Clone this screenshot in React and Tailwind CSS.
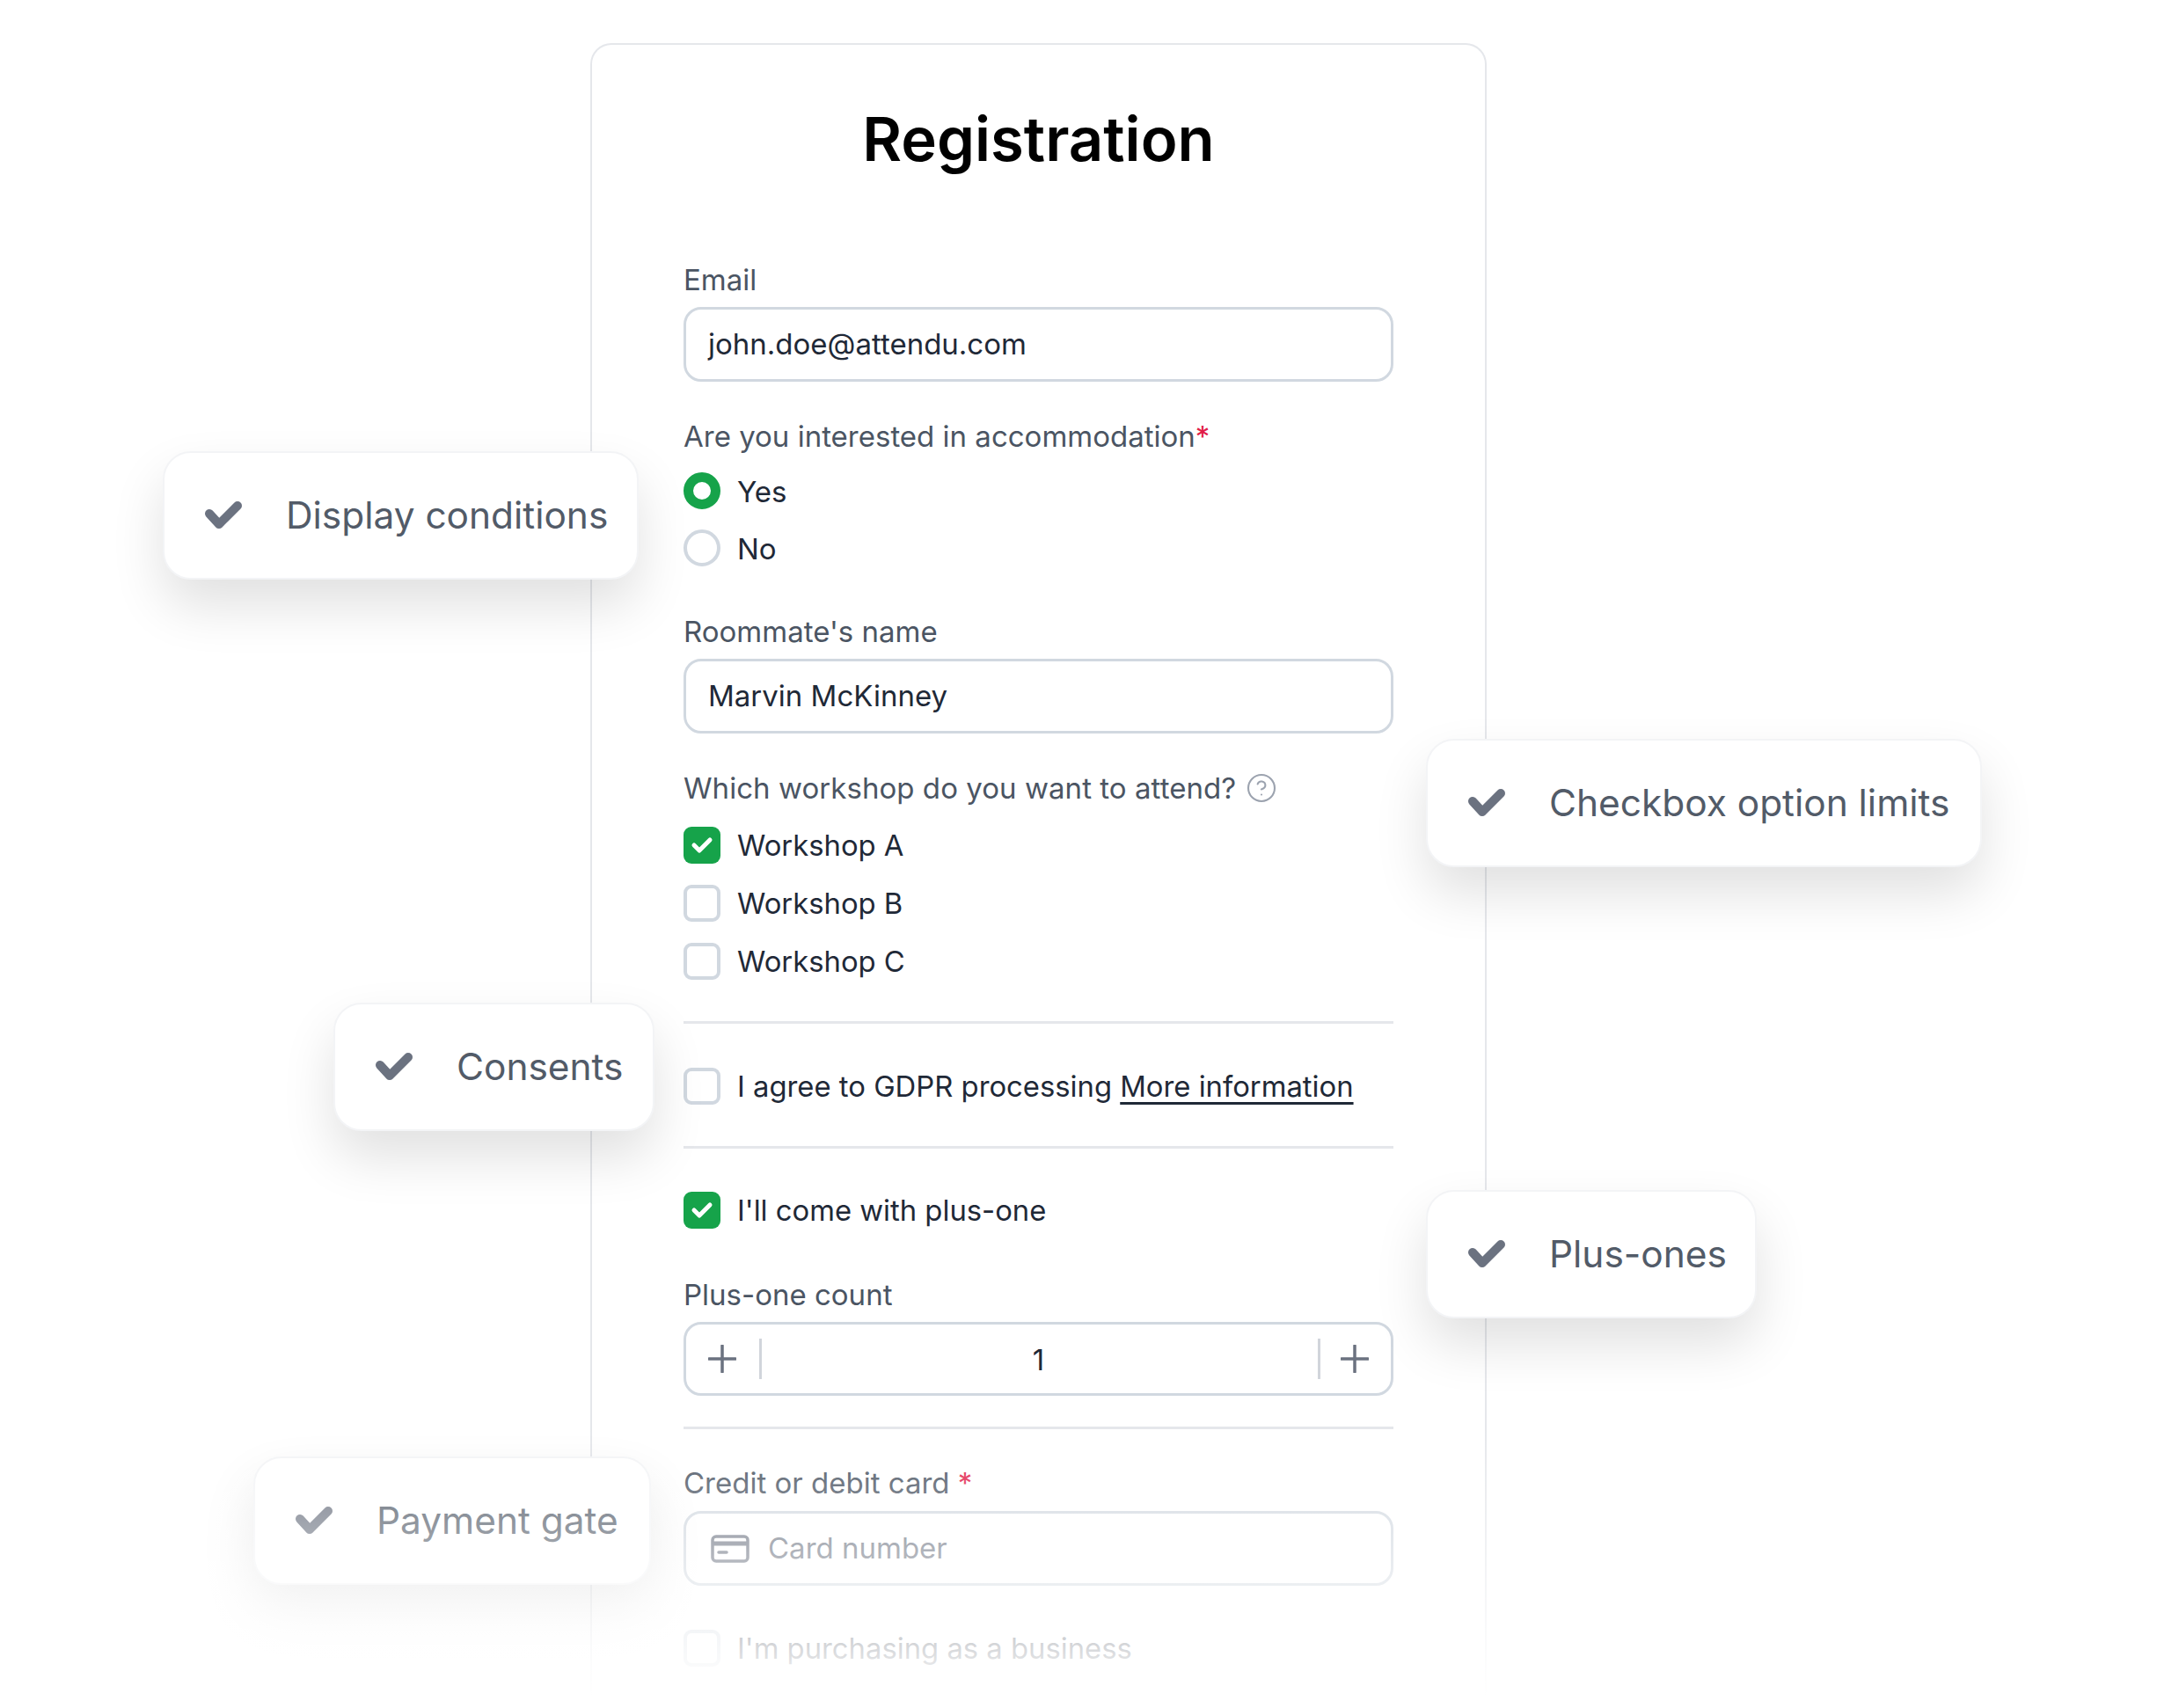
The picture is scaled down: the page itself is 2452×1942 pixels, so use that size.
import { CircleHelp } from 'lucide-react';

function BadgeCheck() {
    return (
        <svg width="46" height="36" viewBox="0 0 46 36" fill="none" className="shrink-0">
            <path d="M7 16 L18 28 L39 7" stroke="#6b7280" strokeWidth="10" strokeLinecap="round" strokeLinejoin="round" />
        </svg>
    );
}

function Badge({ label, className }) {
    return (
        <div className={`absolute flex h-[146px] items-center gap-[48px] rounded-[32px] border-2 border-[#f3f4f6] bg-white pl-[44px] shadow-[0_30px_60px_rgba(0,0,0,0.12)] ${className}`}>
            <BadgeCheck />
            <span className="text-[42.4px] leading-none whitespace-nowrap text-[#525b68]">{label}</span>
        </div>
    );
}

function Label({ children, className = '' }) {
    return <div className={`h-[50px] text-[33px] leading-[50px] text-[#4b5563] ${className}`}>{children}</div>;
}

function Field({ children, className = '' }) {
    return (
        <div className={`flex items-center rounded-[20px] border-[3px] border-[#d1d8e0] pl-[25px] text-[33px] text-[#1f2937] ${className}`}>
            {children}
        </div>
    );
}

function Radio({ checked, label }) {
    return (
        <div className="flex h-[42px] items-center gap-[19px]">
            <span className={checked ? 'h-[42px] w-[42px] rounded-full border-[11px] border-[#16a34a]' : 'h-[42px] w-[42px] rounded-full border-[4px] border-[#d1d8e0]'} />
            <span className="pt-[4px] text-[33px] text-[#1f2937]">{label}</span>
        </div>
    );
}

function Checkbox({ checked, children }) {
    return (
        <div className="flex h-[42px] items-center gap-[19px]">
            {checked ? (
                <span className="flex h-[42px] w-[42px] items-center justify-center rounded-[9px] bg-[#16a34a]">
                    <svg width="26" height="22" viewBox="0 0 26 22" fill="none">
                        <path d="M4 11 L10 17 L22 5" stroke="#fff" strokeWidth="5" strokeLinecap="round" strokeLinejoin="round" />
                    </svg>
                </span>
            ) : (
                <span className="h-[42px] w-[42px] rounded-[9px] border-[4px] border-[#d1d8e0]" />
            )}
            <span className="pt-[2px] text-[32.8px] whitespace-nowrap text-[#1f2937]">{children}</span>
        </div>
    );
}

function Plus() {
    return (
        <svg width="32" height="32" viewBox="0 0 32 32" fill="none">
            <path d="M16 1 V31 M1 16 H31" stroke="#6b7280" strokeWidth="3.5" strokeLinecap="round" />
        </svg>
    );
}

function CardIcon() {
    return (
        <svg width="44" height="32" viewBox="0 0 44 32" fill="none" className="shrink-0">
            <rect x="2" y="2" width="40" height="28" rx="4" stroke="#6b7280" strokeWidth="3.5" />
            <path d="M2 10 H42" stroke="#6b7280" strokeWidth="5" />
            <path d="M9 20 H18" stroke="#6b7280" strokeWidth="3.5" strokeLinecap="round" />
        </svg>
    );
}

export default function App() {
    return (
        <div className="relative h-[1942px] w-[2452px] overflow-hidden bg-white font-['Inter',sans-serif]">
            <div className="ml-[671px] pt-[49px]">
                <div className="h-[1893px] w-[1019px] rounded-t-[24px] border-x-2 border-t-2 border-[#e5e7eb] px-[104px]">
                    <h1 className="mt-[65px] text-center text-[68.8px] leading-[84px] font-semibold text-black">Registration</h1>

                    <Label className="mt-[93px]">Email</Label>
                    <Field className="mt-[6px] h-[85px]">john.doe@attendu.com</Field>

                    <Label className="mt-[37px]">
                        Are you interested in accommodation<span className="text-[#e11d48]">*</span>
                    </Label>
                    <div className="mt-[16px] flex flex-col gap-[23px]">
                        <Radio checked label="Yes" />
                        <Radio label="No" />
                    </div>

                    <Label className="mt-[49px]">Roommate's name</Label>
                    <Field className="mt-[6px] h-[85px]">Marvin McKinney</Field>

                    <Label className="mt-[37px] flex items-center gap-[11px]">
                        <span className="tracking-[0.05px]">Which workshop do you want to attend?</span>
                        <CircleHelp size={36} strokeWidth={1.4} className="text-[#9ca3af]" />
                    </Label>
                    <div className="mt-[19px] flex flex-col gap-[24px]">
                        <Checkbox checked>Workshop A</Checkbox>
                        <Checkbox>Workshop B</Checkbox>
                        <Checkbox>Workshop C</Checkbox>
                    </div>

                    <div className="mt-[47px] h-[3px] bg-[#e5e7eb]" />
                    <div className="mt-[50px]">
                        <Checkbox>
                            I agree to GDPR processing <span className="underline underline-offset-[6px]">More information</span>
                        </Checkbox>
                    </div>
                    <div className="mt-[47px] h-[3px] bg-[#e5e7eb]" />
                    <div className="mt-[49px]">
                        <Checkbox checked>I'll come with plus-one</Checkbox>
                    </div>

                    <Label className="mt-[50px]">Plus-one count</Label>
                    <Field className="mt-[6px] h-[84px] pr-[25px] pl-[22px] text-center">
                        <Plus />
                        <span className="ml-[26px] h-[46px] w-[3px] bg-[#d1d5db]" />
                        <span className="flex-1 pt-[3px] pr-[3px]">1</span>
                        <span className="mr-[23px] h-[46px] w-[3px] bg-[#d1d5db]" />
                        <Plus />
                    </Field>

                    <div className="mt-[35px] h-[3px] bg-[#e5e7eb]" />
                    <Label className="mt-[36px]">
                        Credit or debit card <span className="text-[#e11d48]">*</span>
                    </Label>
                    <Field className="mt-[7px] h-[85px] gap-[21px] pl-[28px] text-[#6b7280]">
                        <CardIcon />
                        Card number
                    </Field>
                    <div className="mt-[50px]">
                        <Checkbox>I'm purchasing as a business</Checkbox>
                    </div>
                </div>
            </div>

            <Badge label="Display conditions" className="top-[513px] left-[185px] w-[541px]" />
            <Badge label="Checkbox option limits" className="top-[840px] left-[1621px] w-[632px]" />
            <Badge label="Consents" className="top-[1140px] left-[379px] w-[365px]" />
            <Badge label="Plus-ones" className="top-[1353px] left-[1621px] w-[376px]" />
            <Badge label="Payment gate" className="top-[1656px] left-[288px] w-[452px]" />

            <div className="absolute inset-x-0 top-[1620px] h-[322px] bg-gradient-to-b from-white/0 to-white to-[96%]" />
        </div>
    );
}
